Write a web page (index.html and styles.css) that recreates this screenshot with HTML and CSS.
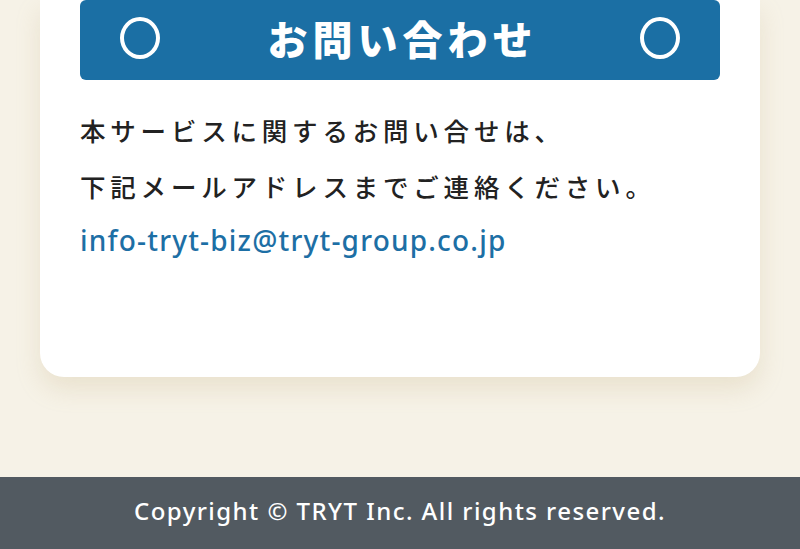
FILE: index.html
```html
<!DOCTYPE html>
<html lang="ja">
  <head>
    <meta charset="UTF-8" />
    <meta name="viewport" content="width=device-width, initial-scale=1.0" />
    <title>お問い合わせ | TRYT</title>

    <link rel="stylesheet" href="styles.css">
  </head>

  <body>
    <main>
      <section class="contact-card">
        <h2 class="contact-title">
          <span class="title-mark"></span>
          <span class="title-text">お問い合わせ</span>
          <span class="title-mark"></span>
        </h2>
        <p class="contact-text">
          本サービスに関するお問い合せは、<br />
          下記メールアドレスまでご連絡ください。
        </p>
        <a class="contact-mail" href="mailto:info-tryt-biz@tryt-group.co.jp">info-tryt-biz@tryt-group.co.jp</a>
      </section>
    </main>

    <footer>
      <p>Copyright © TRYT Inc. All rights reserved.</p>
    </footer>
  </body>
</html>
```

FILE: styles.css
```css
body {
  font-family: "Noto Sans", "Noto Sans CJK JP", sans-serif;
  margin: 0;
  padding: 0;
  background-color: #f6f2e7;
  color: #222;
}

main {
  padding: 0 40px 100px;
}

.contact-card {
  background: #fff;
  border-radius: 0 0 24px 24px;
  padding: 0 40px 111px;
  box-shadow: 0 12px 24px 0 rgba(190, 170, 120, 0.22);
}

.contact-title {
  margin: 0;
  height: 80px;
  background-color: #1b6fa4;
  border-radius: 6px;
  display: flex;
  align-items: center;
  justify-content: space-between;
  padding: 0 40px;
  box-sizing: border-box;
}

.title-mark {
  width: 32px;
  height: 34px;
  border: 4px solid #fff;
  border-radius: 50%;
  margin-top: -4px;
}

.title-text {
  font-family: "Noto Sans CJK JP", sans-serif;
  font-weight: 900;
  font-size: 40px;
  letter-spacing: 5px;
  color: #fff;
  margin-right: -5px;
  margin-top: -4px;
}

.contact-text {
  font-family: "Noto Sans CJK JP", sans-serif;
  font-weight: 500;
  font-size: 25.5px;
  line-height: 56px;
  letter-spacing: 4.8px;
  margin: 22px 0 0;
}

.contact-mail {
  display: block;
  font-size: 28px;
  font-weight: 500;
  letter-spacing: 1.2px;
  line-height: 52px;
  color: #1d6fa5;
  text-decoration: none;
}

footer {
  background-color: #525a61;
  color: #fff;
  text-align: center;
}

footer p {
  margin: 0;
  font-size: 24px;
  font-weight: 500;
  letter-spacing: 1.45px;
  line-height: 68px;
  padding-bottom: 4px;
}
```
